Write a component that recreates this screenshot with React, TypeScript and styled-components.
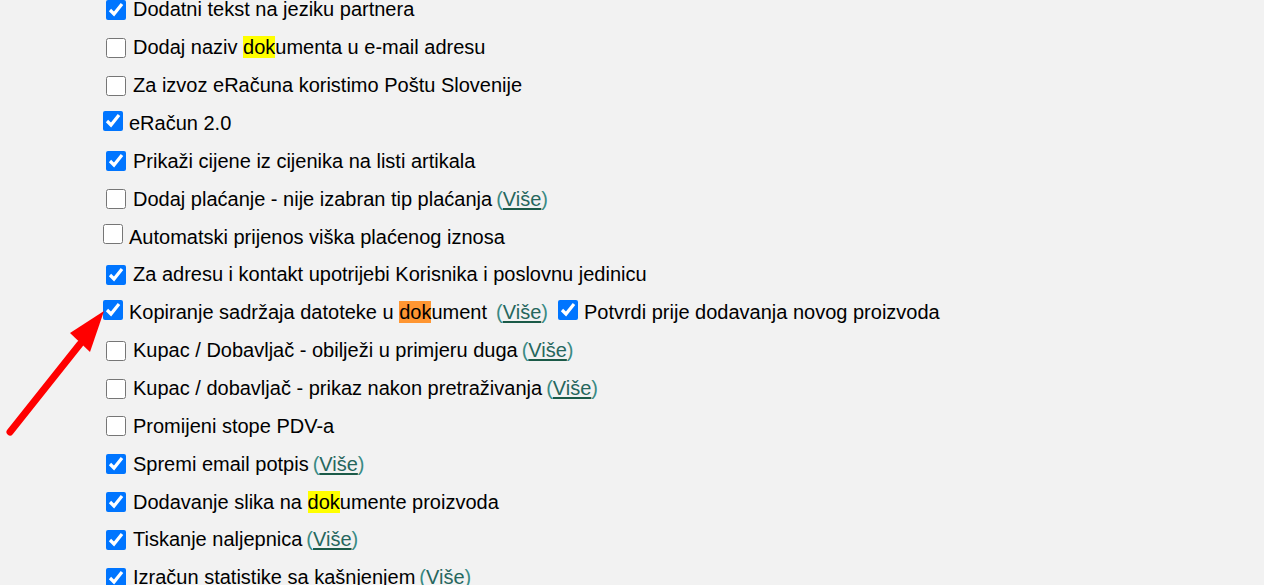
import React from 'react';
import styled, {createGlobalStyle} from 'styled-components';

const GlobalStyle = createGlobalStyle`
  html, body {
    margin: 0;
    padding: 0;
    background: #f2f2f2;
    overflow: hidden;
  }
  body {
    font-family: "Liberation Sans", Arial, sans-serif;
    font-size: 20px;
    color: #000;
  }
`

type Part = string | {mark: 'yellow' | 'orange', text: string};

interface IOption {
    label: Part[],
    checked: boolean,
    more?: boolean,
    plain?: boolean,
    extra?: {label: string, checked: boolean}
}

const options: IOption[] = [
    {label: ['Dodatni tekst na jeziku partnera'], checked: true},
    {label: ['Dodaj naziv ', {mark: 'yellow', text: 'dok'}, 'umenta u e-mail adresu'], checked: false},
    {label: ['Za izvoz eRačuna koristimo Poštu Slovenije'], checked: false},
    {label: ['eRačun 2.0'], checked: true, plain: true},
    {label: ['Prikaži cijene iz cijenika na listi artikala'], checked: true},
    {label: ['Dodaj plaćanje - nije izabran tip plaćanja'], checked: false, more: true},
    {label: ['Automatski prijenos viška plaćenog iznosa'], checked: false, plain: true},
    {label: ['Za adresu i kontakt upotrijebi Korisnika i poslovnu jedinicu'], checked: true},
    {
        label: ['Kopiranje sadržaja datoteke u ', {mark: 'orange', text: 'dok'}, 'ument'],
        checked: true, plain: true, more: true,
        extra: {label: 'Potvrdi prije dodavanja novog proizvoda', checked: true}
    },
    {label: ['Kupac / Dobavljač - obilježi u primjeru duga'], checked: false, more: true},
    {label: ['Kupac / dobavljač - prikaz nakon pretraživanja'], checked: false, more: true},
    {label: ['Promijeni stope PDV-a'], checked: false},
    {label: ['Spremi email potpis'], checked: true, more: true},
    {label: ['Dodavanje slika na ', {mark: 'yellow', text: 'dok'}, 'umente proizvoda'], checked: true},
    {label: ['Tiskanje naljepnica'], checked: true, more: true},
    {label: ['Izračun statistike sa kašnjenjem'], checked: true, more: true},
];

function MoreLink({wide}: {wide?: boolean}) {
    return (
        <More $wide={wide}>
            <Paren>(</Paren><MoreAnchor href="#">Više</MoreAnchor><Paren>)</Paren>
        </More>
    )
}

export default function App() {
    return (
        <Page>
            <GlobalStyle/>
            <List>
                {options.map((o, index) => (
                    <Row key={`opt-${index}`}>
                        <Check type="checkbox" defaultChecked={o.checked} $plain={o.plain}/>
                        <Label>
                            {o.label.map((p, i) => typeof p === 'string'
                                ? <React.Fragment key={i}>{p}</React.Fragment>
                                : <Highlight key={i} $tone={p.mark}>{p.text}</Highlight>)}
                        </Label>
                        {o.more ? <MoreLink wide={!!o.extra}/> : null}
                        {o.extra ? (
                            <>
                                <Check type="checkbox" defaultChecked={o.extra.checked} $plain $inline/>
                                <Label>{o.extra.label}</Label>
                            </>
                        ) : null}
                    </Row>
                ))}
            </List>
            <Arrow width="120" height="140" viewBox="0 0 120 140">
                <line x1="10" y1="122" x2="80" y2="34" stroke="#ff0000" strokeWidth="7" strokeLinecap="round"/>
                <polygon points="104,1 70,23 90,42" fill="#ff0000"/>
            </Arrow>
        </Page>
    )
}

const Page = styled.div`
  position: relative;
  width: 1264px;
  height: 585px;
  overflow: hidden;
`

const List = styled.div`
  display: flex;
  flex-direction: column;
  margin-top: -9px;
  padding-left: 103px;
`

const Row = styled.div`
  display: flex;
  align-items: center;
  height: 37.87px;
  white-space: nowrap;
`

const Check = styled.input<{$plain?: boolean, $inline?: boolean}>`
  width: 20px;
  height: 20px;
  margin: 0 ${p => p.$plain ? '6px' : '7px'} ${p => p.$plain ? '6px' : '0'} ${p => p.$inline ? '10px' : p.$plain ? '0' : '3px'};
  accent-color: #0075ff;
  flex-shrink: 0;
`

const Label = styled.span`
  line-height: 23px;
`

const Highlight = styled.mark<{$tone: 'yellow' | 'orange'}>`
  background: ${p => p.$tone === 'orange' ? '#ff9632' : '#ffff00'};
  color: #000;
`

const More = styled.span<{$wide?: boolean}>`
  margin-left: ${p => p.$wide ? '9px' : '4px'};
  line-height: 23px;
`

const Paren = styled.span`
  color: #3a8a84;
`

const MoreAnchor = styled.a`
  color: #26665d;
  text-decoration: underline;
  text-decoration-color: #1b5a48;
  text-underline-offset: 2px;
`

const Arrow = styled.svg`
  position: absolute;
  left: 0;
  top: 310px;
`
